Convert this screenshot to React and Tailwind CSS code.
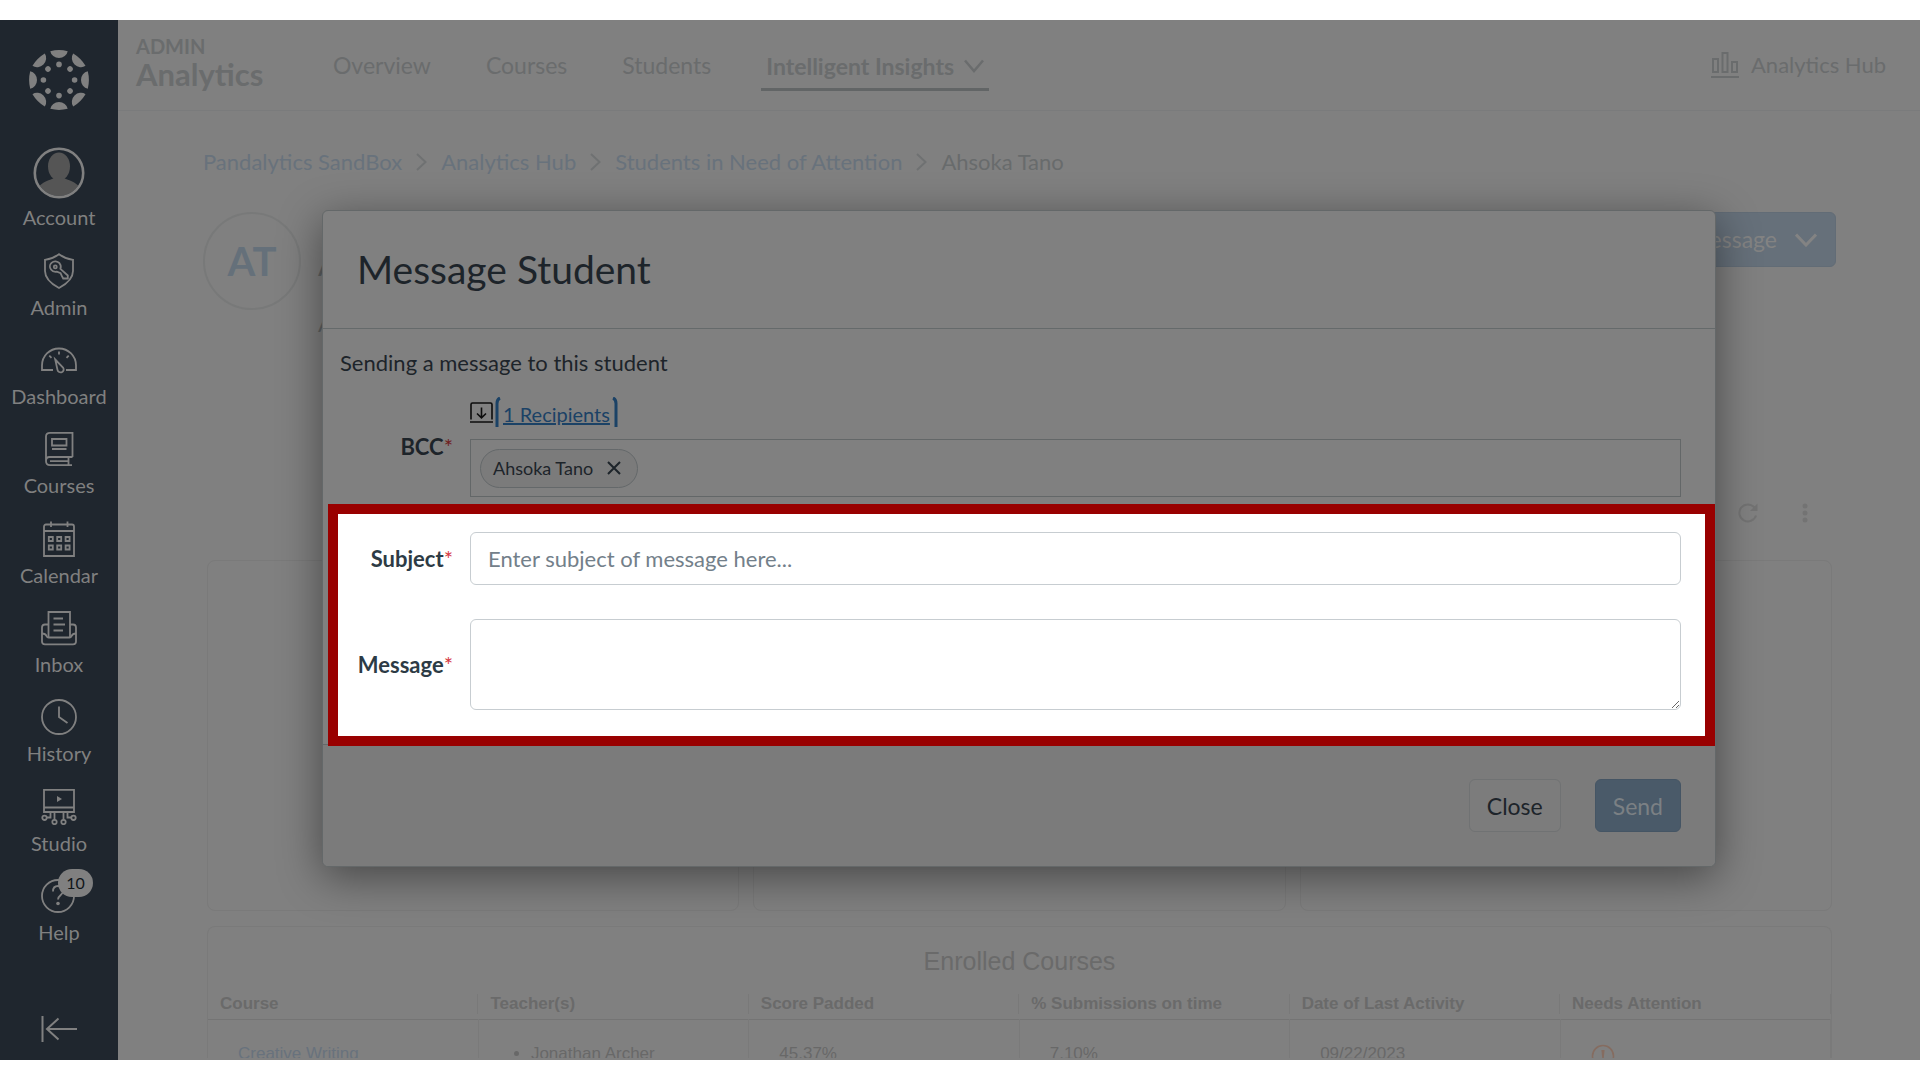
import React from "react";

const iconProps = {
  width: 36,
  height: 36,
  viewBox: "0 0 36 36",
  fill: "none",
  stroke: "currentColor",
  strokeWidth: 1.8,
  "aria-hidden": true,
};

function CanvasLogo() {
  const turns = [0, 45, 90, 135, 180, 225, 270, 315];
  return (
    <svg width="60" height="60" viewBox="0 0 60 60" fill="currentColor" aria-hidden="true">
      {turns.map((a) => (
        <g key={a} transform={`rotate(${a} 30 30)`}>
          <path d="M21.3 1.2 Q30 -1 38.7 1.2 A8.8 8 0 0 1 21.3 1.2Z" />
          <circle cx="30" cy="14.4" r="2.8" />
        </g>
      ))}
    </svg>
  );
}

function AvatarIcon() {
  return (
    <svg width="52" height="52" viewBox="0 0 52 52" aria-hidden="true">
      <clipPath id="avatar-clip">
        <circle cx="26" cy="26" r="23" />
      </clipPath>
      <g clipPath="url(#avatar-clip)" fill="#555555">
        <ellipse cx="26" cy="19.5" rx="11" ry="14" />
        <path d="M4 52V42C9 34 18 33 21 31h10c3 2 12 3 17 11v10z" />
      </g>
      <circle cx="26" cy="26" r="24.2" fill="none" stroke="#808080" strokeWidth="2.6" />
    </svg>
  );
}

function AdminIcon() {
  return (
    <svg {...iconProps}>
      <path d="M18 1.2C13.500 4.600 9 6 4 6.800V18c0 7.500 6.500 13 14 17 7.500-4 14-9.500 14-17V6.800C27 6 22.500 4.600 18 1.200Z" />
      <path d="M10.500 9.800c2.400-2.200 6-1.900 8 .4 1.400 1.700 1.600 3.700.9 5.600l7.400 6.700v3h-4.600l-1.400-2.600-1.200-2.700-3.700-1.500c-2.300.4-4.600-.4-5.900-2.200-1.600-2.100-1.400-5 .5-6.700Z" />
      <circle cx="14.300" cy="13.900" r="1.500" />
    </svg>
  );
}

function DashboardIcon() {
  return (
    <svg {...iconProps}>
      <path d="M12 28H1V23.500C1 14 8.500 6.500 18 6.500S35 14 35 23.500V28H25" />
      <path d="M18 9.500v3M8.300 13.700l2.200 2.200M27.700 13.700l-2.200 2.200" />
      <path d="M14.200 17.500 22 25.500c1.300 1.800.6 4-1.100 4.700-1.900.7-4-.3-4.400-2.300Z" />
    </svg>
  );
}

function CoursesIcon() {
  return (
    <svg {...iconProps}>
      <path d="M31.500 26H8.500C6 26 5 28 5 30V5.500C5 3 6.500 1.800 9 1.800H31.500V26" />
      <path d="M5 30c0 3 1.500 4.200 4 4.200H31M27.500 26.500V34M9 30.200H27" />
      <path d="M11 8H25.500v6.500H11ZM11 18H25.500" />
    </svg>
  );
}

function CalendarIcon() {
  return (
    <svg {...iconProps}>
      <path d="M3 35V5.500C3 4.300 3.800 3.500 5 3.500H31c1.200 0 2 .8 2 2V35ZM3 10H33M10 .5V6M26.500 .5V6" />
      <path d="M7.800 16h4v4h-4ZM16.200 16h4v4h-4ZM24.600 16h4v4h-4ZM7.800 24.500h4v4h-4ZM16.200 24.500h4v4h-4ZM24.600 24.500h4v4h-4Z" />
    </svg>
  );
}

function InboxIcon() {
  return (
    <svg {...iconProps}>
      <path d="M7.500 27V2H29v25M12.500 8.500H22M12.500 14.500H24M12.500 20.500H22" />
      <path d="M7.500 14.500H4c-2 0-3 1-3 3V31.500c0 1.800 1 2.800 3 2.800H32c2 0 3-1 3-2.800V17.500c0-2-1-3-3-3H29" />
      <path d="M1 23.500c3 0 4 1.200 4.600 2.600.4.900 1 1.400 2 1.400H28.500c1 0 1.600-.5 2-1.400.6-1.400 1.500-2.600 4.500-2.600" />
    </svg>
  );
}

function HistoryIcon() {
  return (
    <svg {...iconProps}>
      <circle cx="18" cy="18" r="17" />
      <path d="M18 7.500V18l8.500 6" />
    </svg>
  );
}

function StudioIcon() {
  return (
    <svg {...iconProps}>
      <path d="M3 .9H33V23H3ZM3 18.500H33" />
      <path d="M16 7v6l5-3Z" fill="currentColor" stroke="none" />
      <path d="M9.500 23v5.500H5.500M13.500 23v8.500M22.500 23v8.500M26.500 23v5.500H30.500" />
      <circle cx="3.500" cy="28.800" r="2.200" />
      <circle cx="13.500" cy="33" r="2.200" />
      <circle cx="22.500" cy="33" r="2.200" />
      <circle cx="32.500" cy="28.800" r="2.200" />
    </svg>
  );
}

function HelpIcon() {
  return (
    <svg {...iconProps}>
      <circle cx="17" cy="18" r="16" />
      <path d="M12 13.500C12 10 14 8 17 8c3.200 0 5.300 2 5.300 4.800C22.300 17 17 17 17 21.500" />
      <circle cx="17" cy="25.500" r="1.800" fill="currentColor" stroke="none" />
    </svg>
  );
}

function Chevron({ d, width, height, stroke = 2 }) {
  return (
    <svg width={width} height={height} viewBox={`0 0 ${width} ${height}`} fill="none" stroke="currentColor" strokeWidth={stroke} aria-hidden="true">
      <path d={d} />
    </svg>
  );
}

const navItems = [
  { label: "Account", Icon: AvatarIcon },
  { label: "Admin", Icon: AdminIcon },
  { label: "Dashboard", Icon: DashboardIcon },
  { label: "Courses", Icon: CoursesIcon },
  { label: "Calendar", Icon: CalendarIcon },
  { label: "Inbox", Icon: InboxIcon },
  { label: "History", Icon: HistoryIcon },
  { label: "Studio", Icon: StudioIcon },
  { label: "Help", Icon: HelpIcon, badge: "10" },
];

function Sidebar() {
  return (
    <nav aria-label="Global" className="flex w-[118px] shrink-0 flex-col items-center bg-[#1f262e] pt-[30px] pb-[18px] text-[#808080]">
      <a href="#home" aria-label="Home">
        <CanvasLogo />
      </a>
      <ul className="mt-[30px] grid h-[804px] w-full shrink-0 grid-rows-9">
        {navItems.map(({ label, Icon, badge }) => (
          <li key={label} className="flex items-end justify-center">
            <a href={`#${label.toLowerCase()}`} className="flex flex-col items-center gap-[6px] text-[20px] leading-6">
              <span className="relative">
                <Icon />
                {badge && (
                  <span className="absolute -top-[9px] left-[17px] flex h-7 w-[35px] items-center justify-center rounded-full bg-[#808080] text-[16px] text-[#11161a]">
                    {badge}
                  </span>
                )}
              </span>
              {label}
            </a>
          </li>
        ))}
      </ul>
      <button type="button" aria-label="Minimize global navigation" className="mt-auto">
        <svg width="36" height="26" viewBox="0 0 36 26" fill="none" stroke="currentColor" strokeWidth="2" aria-hidden="true">
          <path d="M1.500 0V26M36 13H6M17.500 2.500 6 13 17.500 23.500" />
        </svg>
      </button>
    </nav>
  );
}

function TopBar() {
  return (
    <header className="flex h-[91px] shrink-0 items-center border-b border-[#7a7b7c] pr-[34px] pl-[18px] text-[#6a6c6d]">
      <div className="mt-[-6px] w-[197px] font-bold">
        <p className="text-[20px] leading-6">ADMIN</p>
        <p className="text-[31px] leading-8">Analytics</p>
      </div>
      <nav aria-label="Analytics" className="flex items-center text-[23px] leading-7">
        <a href="#overview">Overview</a>
        <a href="#courses-report" className="ml-[55px]">Courses</a>
        <a href="#students-report" className="ml-[55px]">Students</a>
        <button type="button" className="mt-[5px] ml-[50px] flex items-center gap-[10px] border-b-3 border-[#626566] px-[5px] pt-[7px] pb-2 font-bold">
          Intelligent Insights
          <Chevron width={20} height={14} d="M1 1.500 10 12 19 1.500" stroke={2.500} />
        </button>
      </nav>
      <a href="#hub" className="ml-auto flex items-center gap-3 text-[22px] leading-7">
        <svg width="28" height="28" viewBox="0 0 28 28" fill="none" stroke="currentColor" strokeWidth="2" aria-hidden="true">
          <path d="M0 26H28M2 8H7V21H2ZM11.500 2H16.500V21H11.500ZM21 11H26V21H21Z" />
        </svg>
        Analytics Hub
      </a>
    </header>
  );
}

function Crumbs() {
  const links = ["Pandalytics SandBox", "Analytics Hub", "Students in Need of Attention"];
  return (
    <nav aria-label="Breadcrumb" className="mt-[37px] text-[22px] leading-7">
      <ol className="flex items-center gap-[14px]">
        {links.map((text) => (
          <li key={text} className="flex items-center gap-[14px] text-[#68727c]">
            <a href="#crumb">{text}</a>
            <span className="text-[#6f7172]">
              <Chevron width={11} height={18} d="M1 1 9.500 9 1 17" />
            </span>
          </li>
        ))}
        <li className="text-[#686b6c]" aria-current="page">Ahsoka Tano</li>
      </ol>
    </nav>
  );
}

function StudentSummary() {
  return (
    <div className="mt-9 flex items-start">
      <div className="flex size-[98px] items-center justify-center rounded-full border-2 border-[#787979] text-[40px] font-bold text-[#65707a]">AT</div>
      <div className="ml-[17px] text-[#5f6263]">
        <p className="pt-[34px] text-[30px] leading-9">Ahsoka Tano</p>
        <p className="pt-[28px] text-[22px] leading-7">Active Student</p>
      </div>
      <button type="button" className="ml-auto flex h-[55px] items-center gap-[18px] rounded-md border border-[#626c76] bg-[#66707a] pr-[18px] pl-5 text-[23px] text-[#838383]">
        Message
        <Chevron width={22} height={14} d="M1 1.500 11 12 21 1.500" stroke={3} />
      </button>
    </div>
  );
}

const columns = ["Course", "Teacher(s)", "Score Padded", "% Submissions on time", "Date of Last Activity", "Needs Attention"];

function CoursesTable() {
  return (
    <section className="mt-[15px] h-[132px] shrink-0 overflow-hidden rounded-t-lg border border-b-0 border-[#7a7a7a] font-['Liberation_Sans',Arial,sans-serif] text-[#6a6a6a]">
      <h2 className="pt-[18px] text-center text-[25px] leading-8">Enrolled Courses</h2>
      <table className="mt-[17px] w-full table-fixed text-left text-[17px] leading-5">
        <thead>
          <tr className="border-b border-[#747474]">
            {columns.map((name) => (
              <th key={name} scope="col" className="pb-[5px] font-bold">
                <span className="block truncate border-r border-[#797979] pl-3">{name}</span>
              </th>
            ))}
          </tr>
        </thead>
        <tbody>
          <tr className="h-[80px] align-top text-[#686868] *:border-r *:border-[#7a7a7a] *:pt-6 *:pl-[30px]">
            <td className="text-[#68727d]"><a href="#creative-writing">Creative Writing</a></td>
            <td>
              <ul className="list-disc pl-[22px]">
                <li>Jonathan Archer</li>
              </ul>
            </td>
            <td>45.37%</td>
            <td>7.10%</td>
            <td>09/22/2023</td>
            <td>
              <svg width="24" height="24" viewBox="0 0 24 24" fill="none" stroke="#856c60" strokeWidth="1.600" role="img" aria-label="Needs attention">
                <circle cx="12" cy="12" r="10.500" />
                <path d="M10.400 6h3.200l-.8 8h-1.600ZM11 16h2v2h-2Z" fill="#856c60" stroke="none" />
              </svg>
            </td>
          </tr>
        </tbody>
      </table>
    </section>
  );
}

function Report() {
  return (
    <>
      <div className="mt-[165px] mr-7 flex items-center justify-end gap-[44px] text-[#737373]">
        <button type="button" aria-label="Refresh">
          <svg width="20" height="20" viewBox="0 0 20 20" fill="none" stroke="currentColor" strokeWidth="2" aria-hidden="true">
            <path d="M18 12.500A8.500 8.500 0 1 1 16.500 4.500" />
            <path d="M19.500 .5V8H12Z" fill="currentColor" stroke="none" />
          </svg>
        </button>
        <button type="button" aria-label="More options">
          <svg width="6" height="20" viewBox="0 0 6 20" fill="currentColor" aria-hidden="true">
            <circle cx="3" cy="3" r="2.500" />
            <circle cx="3" cy="10" r="2.500" />
            <circle cx="3" cy="17" r="2.500" />
          </svg>
        </button>
      </div>
      <div className="mx-1 mt-[37px] flex flex-col">
        <div className="grid h-[351px] grid-cols-3 gap-[14px]">
          <div className="rounded-lg border border-[#7a7a7a]" />
          <div className="rounded-lg border border-[#7a7a7a]" />
          <div className="rounded-lg border border-[#7a7a7a]" />
        </div>
        <CoursesTable />
      </div>
    </>
  );
}

function Star() {
  return <span className="font-normal text-[#d63a3f]">*</span>;
}

function MessageDialog() {
  return (
    <form
      role="dialog"
      aria-labelledby="dialog-title"
      onSubmit={(e) => e.preventDefault()}
      className="flex w-full flex-col rounded-md border border-[#646869] bg-[#808080] text-[22px] leading-7 text-[#1d242a] shadow-[0_10px_44px_rgba(0,0,0,0.45)]"
    >
      <header className="border-b border-[#656a6b] p-[34px]">
        <h1 id="dialog-title" className="text-[39px] leading-[49px]">Message Student</h1>
      </header>

      <div className="pt-5">
        <p className="pl-[17px]">Sending a message to this student</p>
        <div className="mt-5 mb-[7px] flex items-center gap-[17px] pr-[34px] pl-[15px]">
          <span id="bcc-label" className="w-[115px] text-right font-bold">
            BCC<span className="font-normal text-[#6f1d20]">*</span>
          </span>
          <div className="flex flex-1 flex-col gap-3">
            <div className="flex h-[30px] items-center gap-[2px]">
              <svg width="23" height="21" viewBox="0 0 23 21" fill="none" stroke="#0c0c0c" strokeWidth="1.600" aria-hidden="true">
                <path d="M1 17.500V2.500C1 1.500 1.500 1 2.500 1H20.500c1 0 1.500 .5 1.500 1.500V17.500M0 20H23M11.500 5.500V15.500M7 11.500l4.500 4.300 4.500-4.300" />
              </svg>
              <button type="button" className="flex h-[30px] items-center gap-[2px] text-[20px] leading-6 text-[#1b4266]">
                <svg width="6" height="30" viewBox="0 0 6 30" fill="none" stroke="currentColor" strokeWidth="3" aria-hidden="true">
                  <path d="M5 1C2.500 2 2 4 2 6.500V30" />
                </svg>
                <span className="pt-1 underline">1 Recipients</span>
                <svg width="6" height="30" viewBox="0 0 6 30" fill="none" stroke="currentColor" strokeWidth="3" aria-hidden="true">
                  <path d="M1 1C3.500 2 4 4 4 6.500V30" />
                </svg>
              </button>
            </div>
            <div aria-labelledby="bcc-label" role="group" className="flex h-[58px] items-center border border-[#636768] px-[9px]">
              <span className="flex h-[39px] items-center gap-[14px] rounded-full border border-[#64686a] bg-[#7b7b7b] pr-4 pl-3 text-[18px]">
                Ahsoka Tano
                <button type="button" aria-label="Remove Ahsoka Tano">
                  <svg width="14" height="14" viewBox="0 0 14 14" fill="none" stroke="currentColor" strokeWidth="2" aria-hidden="true">
                    <path d="M1 1 13 13M13 1 1 13" />
                  </svg>
                </button>
              </span>
            </div>
          </div>
        </div>

        <div className="relative -mb-[2px] ml-[5px] flex flex-col gap-[34px] border-10 border-[#990000] bg-white pt-[18px] pr-6 pb-[26px] text-[#2d3b45]">
          <div className="flex items-center gap-[17px]">
            <label htmlFor="subject" className="w-[115px] text-right font-bold">
              Subject<Star />
            </label>
            <input
              id="subject"
              type="text"
              placeholder="Enter subject of message here..."
              className="h-[53px] min-w-0 flex-1 rounded-md border border-[#c7cdd1] px-[17px] outline-none placeholder:text-[#73808a]"
            />
          </div>
          <div className="flex items-center gap-[17px]">
            <label htmlFor="message" className="w-[115px] text-right font-bold">
              Message<Star />
            </label>
            <textarea id="message" className="block h-[91px] min-w-0 flex-1 resize rounded-md border border-[#c7cdd1] px-[17px] py-2 outline-none" />
          </div>
        </div>
      </div>

      <footer className="flex justify-end gap-[34px] rounded-b-md border-t border-[#64696a] bg-[#7b7b7b] p-[34px] text-[23px]">
        <button type="button" className="h-[53px] rounded-md border border-[#707273] bg-[#7c7c7c] px-[17px]">Close</button>
        <button type="submit" className="h-[53px] rounded-md border border-[#455564] bg-[#4a5a69] px-[17px] text-[#7b8084]">Send</button>
      </footer>
    </form>
  );
}

export default function App() {
  return (
    <div className="h-screen min-h-[1080px] bg-white py-5 font-[Lato,sans-serif]">
      <div className="relative flex h-full overflow-hidden bg-[#808080]">
        <Sidebar />
        <main className="relative flex min-w-0 flex-1 flex-col">
          <TopBar />
          <div className="flex flex-col pr-[84px] pl-[85px]">
            <Crumbs />
            <StudentSummary />
            <Report />
          </div>
          <div className="absolute inset-x-0 top-0 px-[204px] pt-[190px]">
            <MessageDialog />
          </div>
        </main>
      </div>
    </div>
  );
}
